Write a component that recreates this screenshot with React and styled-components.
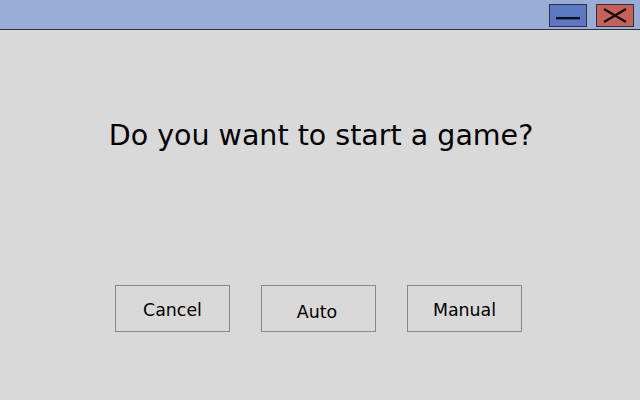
import React from "react";
import styled, { createGlobalStyle } from "styled-components";

const GlobalStyle = createGlobalStyle`
  html, body {
    margin: 0;
    padding: 0;
    background: #d9d9d9;
    font-family: "DejaVu Sans", "Liberation Sans", sans-serif;
  }
`;

const Window = styled.div`
  width: 640px;
  height: 400px;
  display: flex;
  flex-direction: column;
  background: #d9d9d9;
  overflow: hidden;
`;

const TitleBar = styled.div`
  height: 30px;
  flex: none;
  background: #98acd8;
  border-bottom: 1px solid #333333;
  display: flex;
  justify-content: flex-end;
  align-items: flex-start;
  padding: 4px 6px 0 0;
  box-sizing: border-box;
  gap: 9px;
`;

const WinButton = styled.button`
  width: 38px;
  height: 23px;
  padding: 0;
  margin: 0;
  border: 1px solid #333333;
  background: ${({ $color }) => $color};
  display: flex;
  align-items: center;
  justify-content: center;
  box-sizing: border-box;
  cursor: pointer;
`;

const Body = styled.div`
  flex: 1;
  display: flex;
  flex-direction: column;
  align-items: center;
`;

const Question = styled.h1`
  margin: 92px 0 0 2px;
  font-size: 28.5px;
  line-height: 28px;
  font-weight: normal;
  color: #000;
  white-space: nowrap;
`;

const ButtonRow = styled.div`
  margin-top: 135px;
  margin-right: 3px;
  display: flex;
  gap: 31px;
`;

const DialogButton = styled.button`
  width: 115px;
  height: 47px;
  box-sizing: border-box;
  border: 1px solid #888888;
  background: #d9d9d9;
  font-family: "DejaVu Sans", "Liberation Sans", sans-serif;
  font-size: 17.4px;
  color: #000;
  padding: ${({ $drop }) => ($drop ? "6px 3px 0 0" : "3px 0 0")};
  cursor: pointer;
`;

const App = () => {
  return (
    <Window>
      <GlobalStyle />
      <TitleBar>
        <WinButton $color="#5b78c6" aria-label="minimize">
          <svg width="24" height="10" viewBox="0 0 24 10">
            <rect x="0" y="6" width="24" height="2.4" fill="#111" />
          </svg>
        </WinButton>
        <WinButton $color="#c8605a" aria-label="close">
          <svg width="26" height="17" viewBox="0 0 26 17">
            <path d="M2 2 L24 15 M24 2 L2 15" stroke="#111" strokeWidth="2.4" />
          </svg>
        </WinButton>
      </TitleBar>
      <Body>
        <Question>Do you want to start a game?</Question>
        <ButtonRow>
          <DialogButton>Cancel</DialogButton>
          <DialogButton $drop>Auto</DialogButton>
          <DialogButton>Manual</DialogButton>
        </ButtonRow>
      </Body>
    </Window>
  );
};

export default App;
